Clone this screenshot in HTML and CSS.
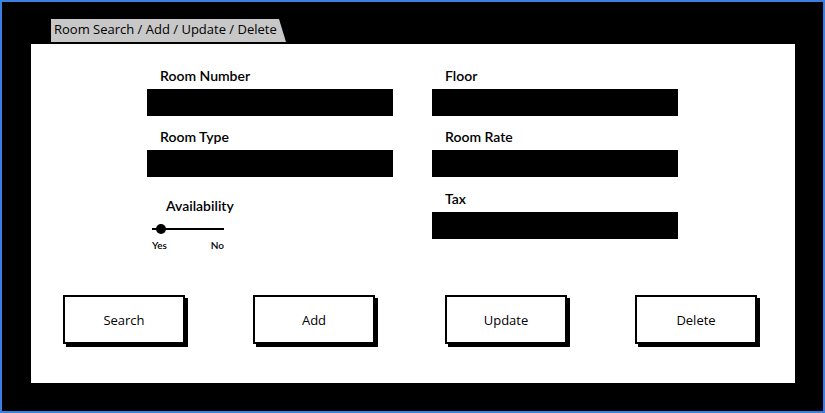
FILE: index.html
```html
<!DOCTYPE html>
<html>
<head>
<meta charset="utf-8">
<link rel="stylesheet" href="styles.css">
</head>
<body>
<div class="window">
  <div class="tab">Room Search / Add / Update / Delete</div>
  <div class="panel">
    <div class="form">
      <div class="col">
        <div class="field">
          <div class="label">Room Number</div>
          <div class="input"></div>
        </div>
        <div class="field">
          <div class="label">Room Type</div>
          <div class="input"></div>
        </div>
        <div class="avail">
          <div class="avail-label">Availability</div>
          <div class="slider"><span class="track"></span><span class="knob"></span></div>
          <div class="ticks"><span>Yes</span><span>No</span></div>
        </div>
      </div>
      <div class="col">
        <div class="field">
          <div class="label">Floor</div>
          <div class="input"></div>
        </div>
        <div class="field">
          <div class="label">Room Rate</div>
          <div class="input"></div>
        </div>
        <div class="field tax">
          <div class="label">Tax</div>
          <div class="input"></div>
        </div>
      </div>
    </div>
    <div class="buttons">
      <div class="btn">Search</div>
      <div class="btn">Add</div>
      <div class="btn shift">Update</div>
      <div class="btn">Delete</div>
    </div>
  </div>
</div>
</body>
</html>
```
FILE: styles.css
```css
* { box-sizing: border-box; }
html, body { margin: 0; padding: 0; background: #fff; }
.window {
  width: 825px;
  height: 413px;
  background: #000;
  border: 2px solid #3a7fe2;
  padding-top: 17px;
  font-family: "Lato", "Open Sans", sans-serif;
}
.tab {
  margin-left: 49px;
  width: 235px;
  height: 23px;
  background: #c8c8c8;
  clip-path: polygon(0 0, 228px 0, 235px 100%, 0 100%);
  font-family: "Open Sans", sans-serif;
  font-size: 13px;
  line-height: 21px;
  padding-left: 3px;
  color: #000;
  white-space: nowrap;
}
.panel {
  margin: 2px 0 0 29px;
  width: 764px;
  height: 339px;
  background: #fff;
  padding-top: 20px;
}
.form {
  display: flex;
  gap: 39px;
  padding-left: 116px;
  height: 231px;
}
.col {
  width: 246px;
  display: flex;
  flex-direction: column;
  gap: 9px;
}
.tax { margin-top: 1px; }
.label {
  height: 25px;
  padding-left: 13px;
  padding-top: 2px;
  font-size: 14px;
  font-weight: 600;
  line-height: 20px;
  color: #000;
}
.input {
  height: 27px;
  background: #000;
}
.avail {
  padding-top: 11px;
}
.avail-label {
  padding-left: 19px;
  font-size: 14px;
  font-weight: 600;
  line-height: 18px;
}
.slider {
  position: relative;
  margin-left: 5px;
  width: 72px;
  height: 12px;
  margin-top: 8px;
}
.track {
  position: absolute;
  left: 0;
  right: 0;
  top: 5px;
  height: 2px;
  background: #000;
}
.knob {
  position: absolute;
  left: 4px;
  top: 1px;
  width: 10px;
  height: 10px;
  border-radius: 50%;
  background: #000;
}
.ticks {
  display: flex;
  justify-content: space-between;
  width: 77px;
  padding-left: 5px;
  margin-top: 3px;
  font-size: 10px;
  font-weight: 600;
  line-height: 14px;
}
.buttons {
  display: flex;
  gap: 68px;
  padding-left: 32px;
}
.btn.shift { margin-left: 2px; }
.btn {
  width: 122px;
  height: 49px;
  border: 2px solid #000;
  box-shadow: 3px 3px 0 #000;
  display: flex;
  align-items: center;
  justify-content: center;
  font-family: "Open Sans", sans-serif;
  font-size: 13px;
  color: #000;
  background: #fff;
}
```
